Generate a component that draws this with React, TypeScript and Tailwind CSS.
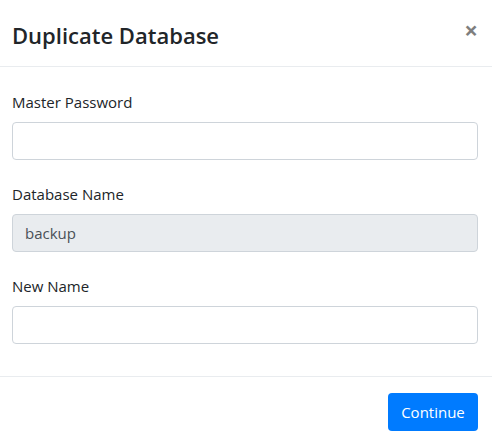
export default function App() {
  return (
    <div
      className="w-[492px] h-[444px] bg-white text-[#212529] overflow-hidden"
      style={{ fontFamily: '"Open Sans", "Noto Sans", Arial, sans-serif' }}
    >
      <div className="flex items-start justify-between pl-3 pr-[14px] pt-[20px] pb-[16px] border-b border-[#e9ecef]">
        <h5 className="text-[22px] leading-[30px] font-semibold">Duplicate Database</h5>
        <button
          type="button"
          className="mt-[-5px] text-[24px] font-bold leading-[30px] text-black opacity-50"
          aria-label="Close"
        >
          ×
        </button>
      </div>

      <div className="flex flex-col gap-[22px] pl-3 pr-[14px] pt-[23px] pb-8">
        <div className="flex flex-col">
          <label className="text-[15px] leading-6 mb-2">Master Password</label>
          <input
            type="password"
            className="h-[38px] w-full rounded border border-[#ced4da] bg-white px-3 text-[15px] text-[#495057] outline-none"
          />
        </div>
        <div className="flex flex-col">
          <label className="text-[15px] leading-6 mb-2">Database Name</label>
          <input
            type="text"
            value="backup"
            disabled
            readOnly
            className="h-[38px] w-full rounded border border-[#ced4da] bg-[#e9ecef] px-3 text-[15px] text-[#495057] outline-none"
          />
        </div>
        <div className="flex flex-col">
          <label className="text-[15px] leading-6 mb-2">New Name</label>
          <input
            type="text"
            className="h-[38px] w-full rounded border border-[#ced4da] bg-white px-3 text-[15px] text-[#495057] outline-none"
          />
        </div>
      </div>

      <div className="flex justify-end pl-3 pr-[14px] pt-4 border-t border-[#e9ecef]">
        <button
          type="button"
          className="h-[38px] w-[90px] rounded bg-[#007bff] text-[15px] leading-6 text-white"
        >
          Continue
        </button>
      </div>
    </div>
  );
}
